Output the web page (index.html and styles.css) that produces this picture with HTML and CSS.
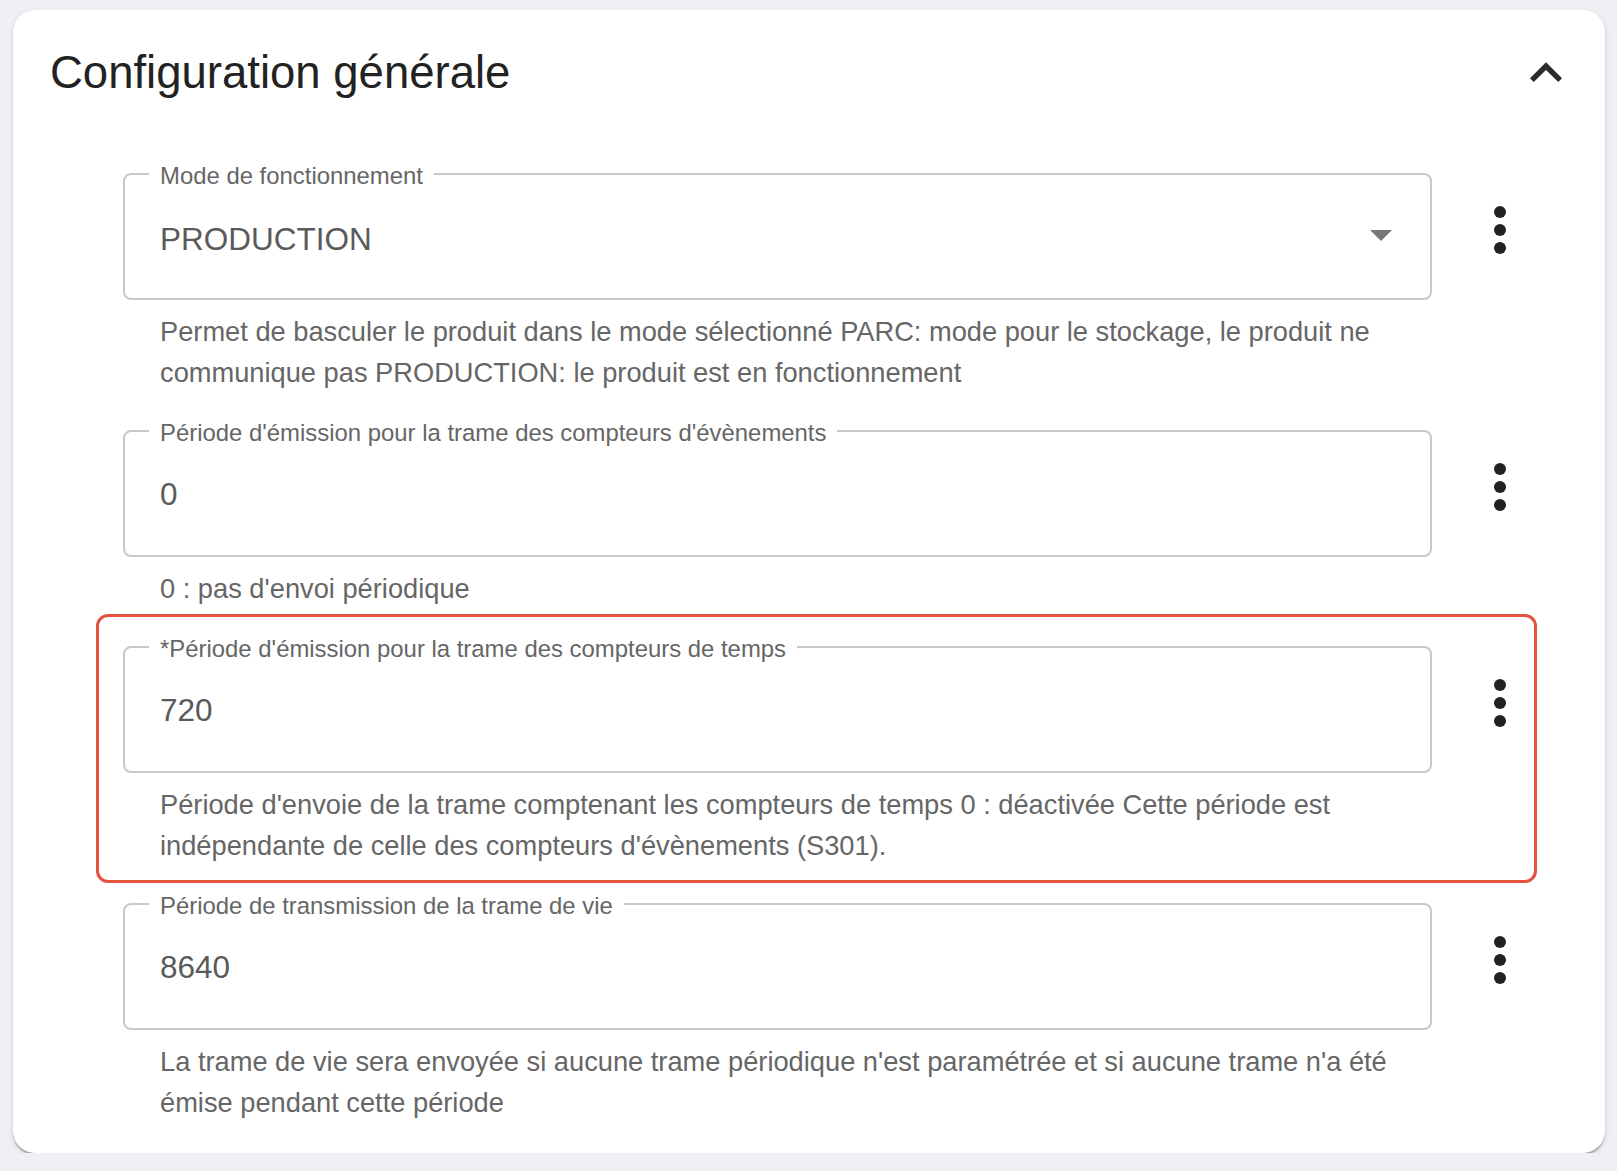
FILE: index.html
```html
<!DOCTYPE html>
<html lang="fr">
<head>
<meta charset="utf-8">
<title>Configuration générale</title>
<link rel="stylesheet" href="styles.css">
</head>
<body>
<section class="card">
  <div class="card-header">
    <h2 class="card-title">Configuration générale</h2>
    <button class="icon-btn expand-btn" aria-label="Réduire">
      <svg viewBox="0 0 24 24"><path d="M12 8l-6 6 1.41 1.41L12 10.83l4.59 4.58L18 14z"/></svg>
    </button>
  </div>

  <div class="field-list">
    <div class="field-row">
      <div class="field-col">
        <fieldset class="field">
          <legend>Mode de fonctionnement</legend>
          <div class="field-input field-input--select">
            <span class="field-value">PRODUCTION</span>
            <svg class="dropdown-arrow" viewBox="7 10 10 5" preserveAspectRatio="none"><path d="M7 10l5 5 5-5z"/></svg>
          </div>
        </fieldset>
        <p class="helper">Permet de basculer le produit dans le mode sélectionné PARC: mode pour le stockage, le produit ne communique pas PRODUCTION: le produit est en fonctionnement</p>
      </div>
      <button class="icon-btn more-btn" aria-label="Plus">
        <svg viewBox="0 0 24 24"><circle cx="12" cy="6" r="2"/><circle cx="12" cy="12" r="2"/><circle cx="12" cy="18" r="2"/></svg>
      </button>
    </div>

    <div class="field-row">
      <div class="field-col">
        <fieldset class="field">
          <legend>Période d'émission pour la trame des compteurs d'évènements</legend>
          <div class="field-input">
            <span class="field-value">0</span>
          </div>
        </fieldset>
        <p class="helper">0 : pas d'envoi périodique</p>
      </div>
      <button class="icon-btn more-btn" aria-label="Plus">
        <svg viewBox="0 0 24 24"><circle cx="12" cy="6" r="2"/><circle cx="12" cy="12" r="2"/><circle cx="12" cy="18" r="2"/></svg>
      </button>
    </div>

    <div class="field-row field-row--highlight">
      <div class="field-col">
        <fieldset class="field">
          <legend>*Période d'émission pour la trame des compteurs de temps</legend>
          <div class="field-input">
            <span class="field-value">720</span>
          </div>
        </fieldset>
        <p class="helper">Période d'envoie de la trame comptenant les compteurs de temps 0 : déactivée Cette période est indépendante de celle des compteurs d'évènements (S301).</p>
      </div>
      <button class="icon-btn more-btn" aria-label="Plus">
        <svg viewBox="0 0 24 24"><circle cx="12" cy="6" r="2"/><circle cx="12" cy="12" r="2"/><circle cx="12" cy="18" r="2"/></svg>
      </button>
    </div>

    <div class="field-row">
      <div class="field-col">
        <fieldset class="field">
          <legend>Période de transmission de la trame de vie</legend>
          <div class="field-input">
            <span class="field-value">8640</span>
          </div>
        </fieldset>
        <p class="helper">La trame de vie sera envoyée si aucune trame périodique n'est paramétrée et si aucune trame n'a été émise pendant cette période</p>
      </div>
      <button class="icon-btn more-btn" aria-label="Plus">
        <svg viewBox="0 0 24 24"><circle cx="12" cy="6" r="2"/><circle cx="12" cy="12" r="2"/><circle cx="12" cy="18" r="2"/></svg>
      </button>
    </div>
  </div>
</section>
</body>
</html>
```

FILE: styles.css
```css
* {
  box-sizing: border-box;
}

html, body {
  background: #efeff4;
}

body {
  margin: 0;
  padding: 10px 12px 0 13px;
  font-family: "Liberation Sans", Arial, sans-serif;
  color: #222;
}

.card {
  background: #fff;
  border-radius: 22px;
  padding: 31px 27px 30px 37px;
  box-shadow: 0 3px 2px -1px rgba(0, 0, 0, 0.2), 0 2px 2px rgba(0, 0, 0, 0.12), 0 2px 6px rgba(0, 0, 0, 0.1);
}

.card-header {
  display: flex;
  align-items: center;
  justify-content: space-between;
  height: 64px;
}

.card-title {
  margin: 0;
  font-size: 45.5px;
  font-weight: 400;
  line-height: 52px;
  color: #222;
}

.icon-btn {
  border: 0;
  background: none;
  padding: 0;
  margin: 0;
  display: block;
  cursor: pointer;
}

.icon-btn svg {
  display: block;
  width: 100%;
  height: 100%;
}

.expand-btn {
  width: 64px;
  height: 64px;
}

.expand-btn svg {
  fill: #2b2b2b;
}

.field-list {
  margin: 57px 42px 0 73px;
}

.field-row {
  position: relative;
  display: flex;
  align-items: flex-start;
}

.field-row + .field-row {
  margin-top: 26px;
}

.field-row--highlight::before {
  content: "";
  position: absolute;
  top: -21px;
  left: -27px;
  right: -1px;
  bottom: -17px;
  border: 3px solid #e4533d;
  border-radius: 12px;
  pointer-events: none;
}

.field-col {
  flex: 1;
  min-width: 0;
}

.field {
  margin: 0;
  min-width: 0;
  padding: 0 35px 11px 35px;
  border: 2px solid #c8c8c8;
  border-radius: 8px;
}

.field legend {
  margin-left: -11px;
  padding: 4px 11px 0 11px;
  font-size: 23.9px;
  line-height: 20px;
  color: #666;
}

.field-input {
  height: 101px;
  padding-top: 2px;
  display: flex;
  align-items: center;
}

.field-input--select {
  padding-top: 6px;
}

.field-value {
  flex: 1;
  font-size: 31.5px;
  color: #5a5a5a;
}

.dropdown-arrow {
  width: 22px;
  height: 11px;
  margin-right: 3px;
  margin-top: -8px;
  fill: #777;
}

.helper {
  margin: 11px 0 0 0;
  padding-left: 37px;
  font-size: 27.25px;
  line-height: 41px;
  color: #666;
}

.more-btn {
  flex: none;
  width: 72px;
  height: 72px;
  margin-top: 32px;
  margin-left: 32px;
}

.more-btn svg {
  fill: #222;
}
```
